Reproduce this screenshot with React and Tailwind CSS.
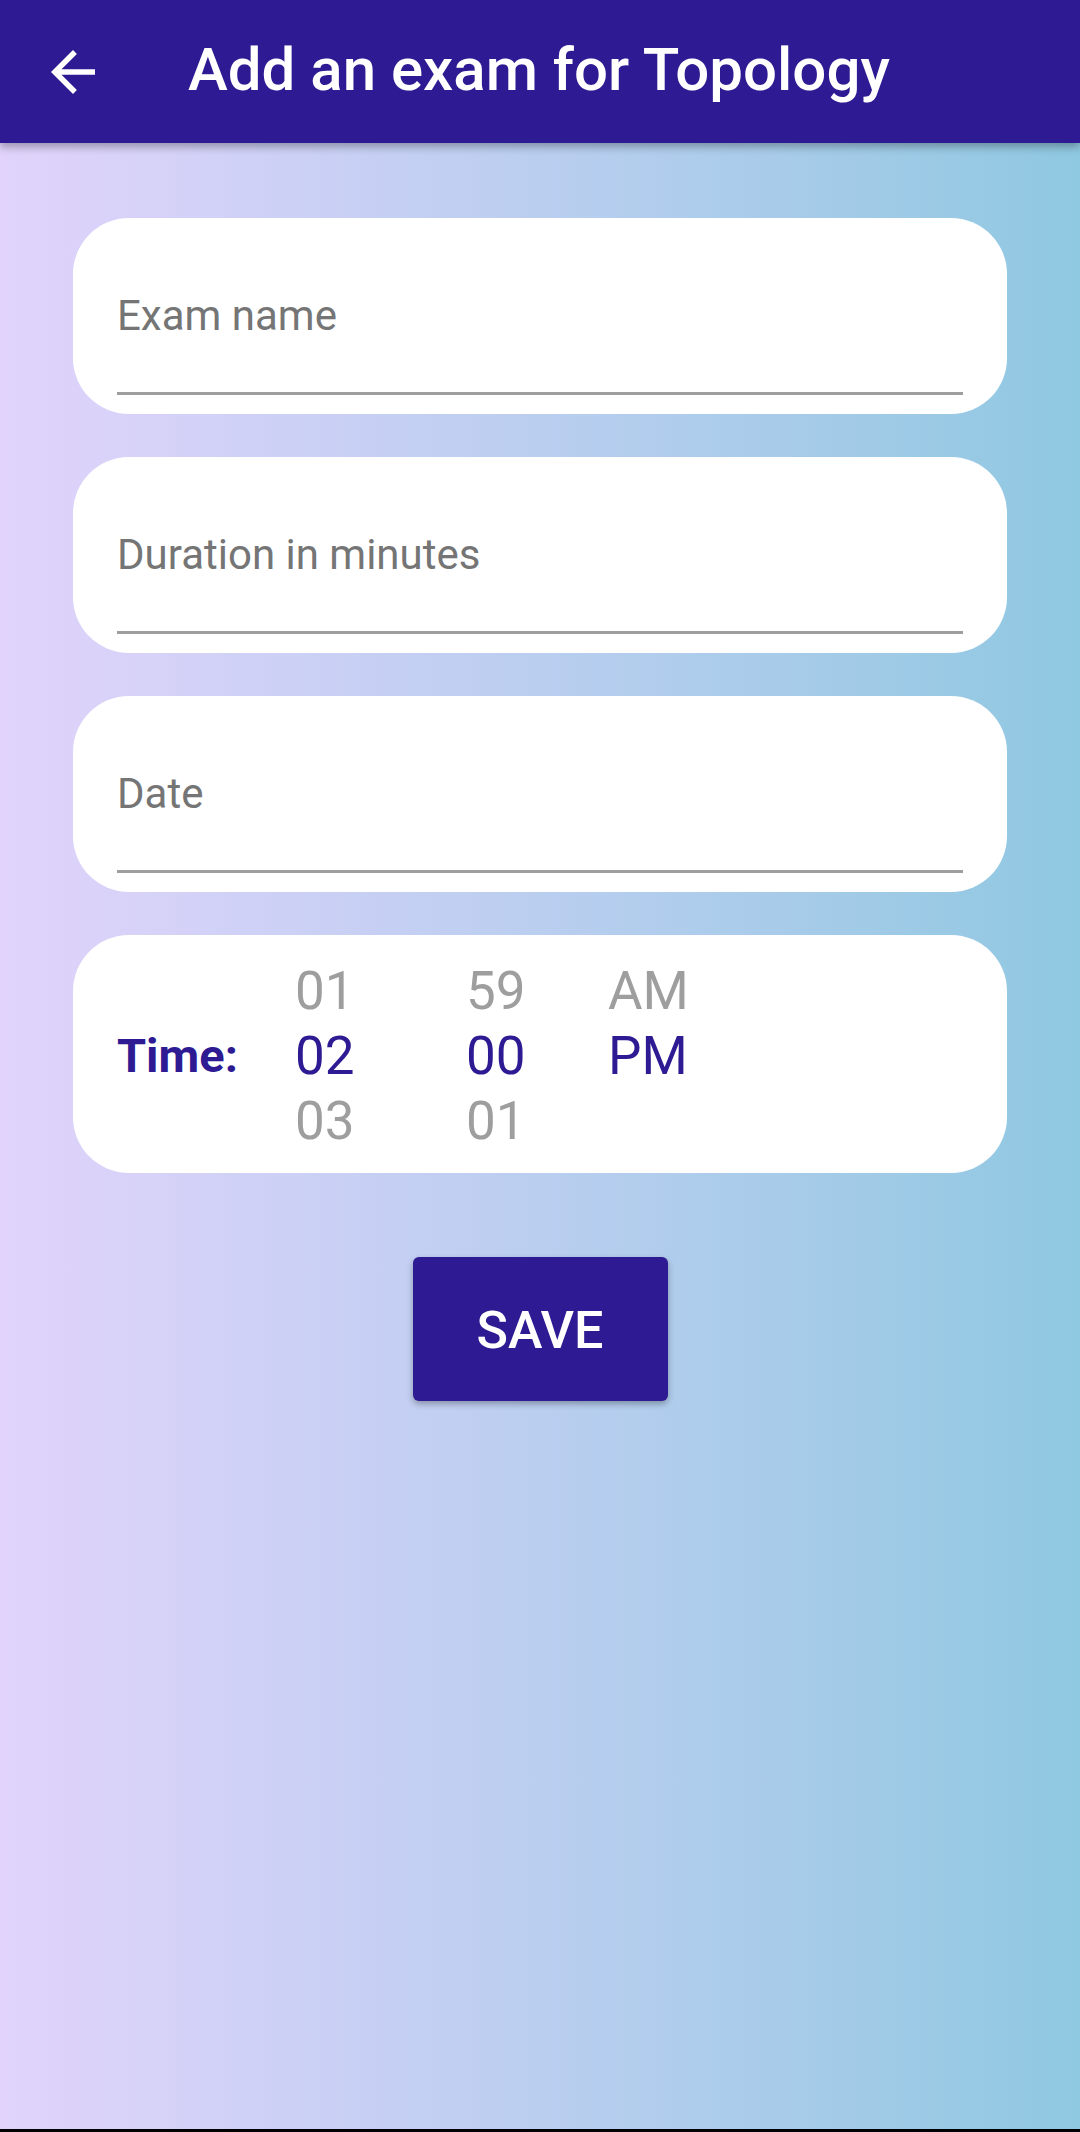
import React from 'react'

const fields = ['Exam name', 'Duration in minutes', 'Date']

const TextCard = ({ label }) => (
  <div className="h-[196px] rounded-[56px] bg-white px-[44px] pt-[73px]">
    <div className="h-[50px] text-[42px] leading-[50px] text-[#757575]">{label}</div>
    <div className="mt-[51px] h-[3px] bg-[#9e9e9e]" />
  </div>
)

const Column = ({ items, selected, width }) => (
  <div className={`flex flex-col pt-[4px] ${width}`}>
    {items.map((item, i) => (
      <div
        key={i}
        className={`h-[65px] text-[53px] leading-[65px] ${i === selected ? 'text-[#2e1a92]' : 'text-[#9e9e9e]'}`}
      >
        {item}
      </div>
    ))}
  </div>
)

const App = () => {
  return (
    <div
      className="relative flex min-h-[2132px] flex-col bg-gradient-to-r from-[#e1d3fb] via-[#bacef0] to-[#8fc8e1]"
      style={{ fontFamily: 'Roboto, "Noto Sans", sans-serif' }}
    >
      <header className="relative z-10 flex h-[143px] items-center bg-[#2e1a92] shadow-[0_4px_8px_rgba(0,0,0,0.3)]">
        <div className="flex w-[146px] justify-center">
          <svg width="66" height="66" viewBox="0 0 24 24" fill="#ffffff">
            <path d="M20 11H7.83l5.59-5.59L12 4l-8 8 8 8 1.41-1.41L7.83 13H20v-2z" />
          </svg>
        </div>
        <h1 className="ml-[42px] pb-[4px] text-[60px] font-medium leading-none text-white">Add an exam for Topology</h1>
      </header>

      <main className="flex flex-col gap-[43px] px-[73px] pt-[75px]">
        {fields.map((f) => (
          <TextCard key={f} label={f} />
        ))}
        <div className="flex h-[238px] items-center rounded-[56px] bg-white pl-[44px]">
          <div className="w-[178px] pt-[3px] text-[47px] font-bold leading-none text-[#2e1a92]">Time:</div>
          <Column items={['01', '02', '03']} selected={1} width="w-[171px]" />
          <Column items={['59', '00', '01']} selected={1} width="w-[142px]" />
          <Column items={['AM', 'PM', '']} selected={1} width="w-[120px]" />
        </div>
      </main>

      <div className="flex justify-center pt-[84px]">
        <button
          type="button"
          className="flex h-[144px] w-[255px] items-center justify-center rounded-[6px] bg-[#2e1a92] pt-[4px] text-[52px] font-medium text-white shadow-[0_3px_6px_rgba(0,0,0,0.3)]"
        >
          SAVE
        </button>
      </div>

      <div className="absolute bottom-0 left-0 h-[3px] w-full bg-black" />
    </div>
  )
}

export default App
